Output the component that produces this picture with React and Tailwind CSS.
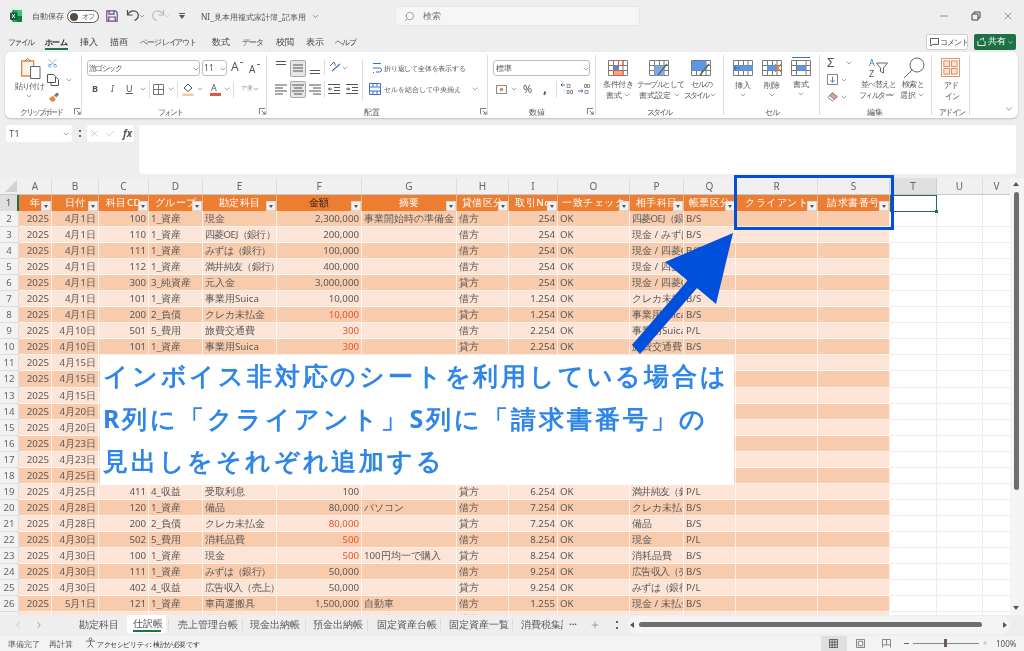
import { ChevronDown, ChevronLeft, ChevronRight, Search, Minus, X, Check, Plus, Scissors } from 'lucide-react'

const cols = [
  { k: 'a', w: 'w-[33px]', right: true },
  { k: 'b', w: 'w-[47px]', right: true },
  { k: 'c', w: 'w-[50px]', right: true },
  { k: 'd', w: 'w-[54px]' },
  { k: 'e', w: 'w-[74px]' },
  { k: 'f', w: 'w-[85px]', right: true },
  { k: 'g', w: 'w-[95px]' },
  { k: 'h', w: 'w-[52px]' },
  { k: 'i', w: 'w-[49px]', right: true },
  { k: 'o', w: 'w-[72px]' },
  { k: 'p', w: 'w-[54px]' },
  { k: 'q', w: 'w-[52px]' },
  { k: 'r', w: 'w-[82px]' },
  { k: 's', w: 'w-[72px]' },
]
const letters = ['A', 'B', 'C', 'D', 'E', 'F', 'G', 'H', 'I', 'O', 'P', 'Q', 'R', 'S']
const heads = ['年', '日付', '科目CD', 'グループ', '勘定科目', '金額', '摘要', '貸借区分', '取引No', '一致チェック', '相手科目', '帳票区分', 'クライアント', '請求書番号']

// [date, code, group, account, amount, memo, side, no, other, kind, red]
const rows = [
  ['4月1日', '100', '1_資産', '現金', '2,300,000', '事業開始時の準備金', '借方', '254', '四菱OEJ（銀行）', 'B/S'],
  ['4月1日', '110', '1_資産', '四菱OEJ（銀行）', '200,000', '', '借方', '254', '現金 / みずは', 'B/S'],
  ['4月1日', '111', '1_資産', 'みずは（銀行）', '100,000', '', '借方', '254', '現金 / 四菱OEJ', 'B/S'],
  ['4月1日', '112', '1_資産', '満井純友（銀行）', '400,000', '', '借方', '254', '現金 / 四菱OEJ', 'B/S'],
  ['4月1日', '300', '3_純資産', '元入金', '3,000,000', '', '貸方', '254', '現金 / 四菱OEJ', 'B/S'],
  ['4月1日', '101', '1_資産', '事業用Suica', '10,000', '', '借方', '1.254', 'クレカ未払金', 'B/S'],
  ['4月1日', '200', '2_負債', 'クレカ未払金', '10,000', '', '貸方', '1.254', '事業用Suica', 'B/S', true],
  ['4月10日', '501', '5_費用', '旅費交通費', '300', '', '借方', '2.254', '事業用Suica', 'P/L', true],
  ['4月10日', '101', '1_資産', '事業用Suica', '300', '', '貸方', '2.254', '旅費交通費', 'B/S', true],
  ['4月15日'], ['4月15日'], ['4月15日'], ['4月20日'], ['4月20日'], ['4月23日'], ['4月23日'], ['4月25日'],
  ['4月25日', '411', '4_収益', '受取利息', '100', '', '貸方', '6.254', '満井純友（銀行）', 'P/L'],
  ['4月28日', '120', '1_資産', '備品', '80,000', 'パソコン', '借方', '7.254', 'クレカ未払金', 'B/S'],
  ['4月28日', '200', '2_負債', 'クレカ未払金', '80,000', '', '貸方', '7.254', '備品', 'B/S', true],
  ['4月30日', '502', '5_費用', '消耗品費', '500', '', '借方', '8.254', '現金', 'P/L', true],
  ['4月30日', '100', '1_資産', '現金', '500', '100円均一で購入', '貸方', '8.254', '消耗品費', 'B/S', true],
  ['4月30日', '111', '1_資産', 'みずは（銀行）', '50,000', '', '借方', '9.254', '広告収入（売上）', 'B/S'],
  ['4月30日', '402', '4_収益', '広告収入（売上）', '50,000', '', '貸方', '9.254', 'みずは（銀行）', 'P/L'],
  ['5月1日', '121', '1_資産', '車両運搬具', '1,500,000', '自動車', '借方', '1.255', '現金 / 未払金', 'B/S'],
  ['5月1日', '200', '2_負債', '未払金', '1,500,000', '自動車', '貸方', '1.255', '車両運搬具', 'B/S'],
]

function T({ className, children }) {
  return <span className={`absolute whitespace-nowrap leading-[12px] ${className}`}>{children}</span>
}

function Chev({ className }) {
  return <ChevronDown strokeWidth={1.6} className={`absolute w-[8px] h-[8px] text-[#555] ${className}`} />
}

function Launcher({ className }) {
  return (
    <svg viewBox="0 0 8 8" className={`absolute w-[7px] h-[7px] ${className}`} fill="none" stroke="#666">
      <path d="M.5 7V.5H7M3 3l4 4M7 4v3H4" />
    </svg>
  )
}

function FilterBtn() {
  return (
    <span className="absolute right-[0px] bottom-[0px] w-[10px] h-[10px] bg-[#f0f0f0] border border-[#d8d8d8] flex items-center justify-center">
      <span className="w-0 h-0 border-l-[2.5px] border-r-[2.5px] border-t-[3px] border-l-transparent border-r-transparent border-t-[#555]" />
    </span>
  )
}

// 3x4 sheet icon used by the style and cell buttons
function Sheet({ className, children }) {
  return (
    <svg viewBox="0 0 20 16" className={`absolute w-[20px] h-[16px] ${className}`} fill="none">
      <path d="M.5.5h19v15H.5zM.5 5.5h19M.5 10.5h19M5.5.5v15M10.5.5v15M15 .5v15" stroke="#7a7a7a" />
      {children}
    </svg>
  )
}

function Lines({ className, d }) {
  return (
    <svg viewBox="0 0 14 14" className={`absolute w-[14px] h-[14px] ${className}`} fill="none" stroke="#555" strokeWidth="1">
      <path d={d} />
    </svg>
  )
}

function Sep({ className }) {
  return <span className={`absolute w-px bg-[#dcdcdc] ${className}`} />
}

function Grid() {
  return (
    <div className="absolute left-0 top-[178px] w-[1010px] h-[437px] overflow-hidden bg-white text-[9.7px] text-[#595959]">
      {/* column letters */}
      <div className="flex h-[17px] bg-[#f0f0f0] border-b border-[#c8c8c8] text-[10px] text-[#666] font-['Liberation_Sans',sans-serif]">
        <div className="w-[19px] relative">
          <span className="absolute right-[2px] bottom-[2px] w-0 h-0 border-l-[12px] border-t-[12px] border-l-transparent border-t-transparent border-b-0 border-r-[12px] border-r-[#d2d2d2]" />
        </div>
        {cols.map((c, i) => (
          <div key={c.k} className={`${c.w} border-r border-[#dddddd] flex items-center justify-center`}>{letters[i]}</div>
        ))}
        <div className="w-[47px] bg-[#e0e0e0] border-r border-[#cfcfcf] flex items-center justify-center">T</div>
        <div className="w-[46px] border-r border-[#dddddd] flex items-center justify-center">U</div>
        <div className="w-[27px] flex items-center justify-center">V</div>
      </div>
      {/* header row */}
      <div className="flex h-[16px]">
        <div className="w-[19px] bg-[#dedede] border-r-2 border-[#217346] text-center leading-[16px] text-[#555]">1</div>
        {cols.map((c, i) => (
          <div key={c.k} className={`${c.w} relative bg-[#ed7d31] border-r border-[#f5b68c] text-center font-medium leading-[15px] overflow-hidden whitespace-nowrap ${c.k === 'f' ? 'text-[#1a1a1a] font-bold' : 'text-white'}`}>
            <span className="tracking-[0.5px]">{heads[i]}</span>
            <FilterBtn />
          </div>
        ))}
        <div className="w-[47px] border-r border-[#ececec]" />
        <div className="w-[46px] border-r border-[#ececec]" />
      </div>
      {/* data rows */}
      {rows.map((r, i) => {
        const dark = i % 2 === 0
        const vals = { a: '2025', b: r[0], c: r[1], d: r[2], e: r[3], f: r[4], g: r[5], h: r[6], i: r[7], o: r[7] && 'OK', p: r[8], q: r[9] }
        return (
          <div key={i} className="flex h-[16.05px]">
            <div className="w-[19px] bg-[#f2f2f2] border-r border-b border-[#dcdcdc] text-center leading-[16px] text-[#666]">{i + 2}</div>
            {cols.map(c => (
              <div
                key={c.k}
                className={`${c.w} px-[2px] border-r border-b border-white/70 leading-[16.5px] overflow-hidden whitespace-nowrap ${c.right ? 'text-right' : ''} ${dark ? 'bg-[#f8cbad]' : 'bg-[#fce4d6]'} ${c.k === 'f' && r[10] ? 'text-[#e4572e]' : ''} ${vals[c.k] && vals[c.k].includes('（') ? 'tracking-[-0.7px]' : ''}`}
              >
                {vals[c.k]}
              </div>
            ))}
            <div className="w-[47px] border-r border-b border-[#ececec]" />
            <div className="w-[46px] border-r border-b border-[#ececec]" />
            <div className="w-[27px] border-b border-[#ececec]" />
          </div>
        )
      })}
      {/* selected cell T1 */}
      <div className="absolute left-[890px] top-[17px] w-[47px] h-[17px] border border-[#217346]">
        <span className="absolute right-[-2px] bottom-[-2px] w-[3px] h-[3px] bg-[#217346]" />
      </div>
    </div>
  )
}

function TitleBar() {
  return (
    <>
      <svg viewBox="0 0 12 12" className="absolute left-[10px] top-[10px] w-[12px] h-[12px]">
        <rect x="2" y="0" width="10" height="12" rx="1" fill="#21a366" />
        <rect x="7" y="0" width="5" height="6" fill="#33c481" />
        <rect x="7" y="6" width="5" height="6" fill="#107c41" />
        <rect x="0" y="2.5" width="7.5" height="7.5" rx="1" fill="#185c37" />
        <path d="M2 4l3 4M5 4L2 8" stroke="#fff" strokeWidth=".9" />
      </svg>
      <T className="left-[32px] top-[10px] text-[8px] text-[#555]">自動保存</T>
      <div className="absolute left-[67px] top-[10px] w-[32px] h-[13px] rounded-full border border-[#555] bg-white">
        <span className="absolute left-[2px] top-[1.5px] w-[8px] h-[8px] rounded-full bg-[#5a4a44]" />
        <T className="left-[14px] top-[0px] text-[7px] text-[#555] tracking-[-1px]">オフ</T>
      </div>
      <svg viewBox="0 0 12 12" className="absolute left-[106px] top-[10px] w-[12px] h-[12px]" fill="none" stroke="#6b4a80" strokeWidth="1.2">
        <path d="M.8.8h8.6l1.8 1.8v8.6H.8zM3 .8v3.4h5V.8M2.8 11.2V7h6.4v4.2" />
      </svg>
      <svg viewBox="0 0 14 14" className="absolute left-[126px] top-[8px] w-[14px] h-[14px]" fill="none" stroke="#4a4a4a" strokeWidth="1.2">
        <path d="M1.5 2v5h5M1.8 6.8C3 4 5 2.8 7.5 2.8c3 0 4.8 2.2 4.8 4.6 0 2.4-1.6 4-3.8 5" />
      </svg>
      <Chev className="left-[138px] top-[12px] w-[7px] h-[7px]" />
      <svg viewBox="0 0 14 14" className="absolute left-[151px] top-[8px] w-[14px] h-[14px]" fill="none" stroke="#bcbcbc" strokeWidth="1.2">
        <path d="M12.5 2v5h-5M12.2 6.8C11 4 9 2.8 6.5 2.8c-3 0-4.8 2.2-4.8 4.6 0 2.4 1.6 4 3.8 5" />
      </svg>
      <Chev className="left-[163px] top-[12px] w-[7px] h-[7px] opacity-30" />
      <span className="absolute left-[179px] top-[13px] w-[6px] h-px bg-[#555]" />
      <span className="absolute left-[179px] top-[15px] w-0 h-0 border-l-[3px] border-r-[3px] border-t-[4px] border-l-transparent border-r-transparent border-t-[#555]" />
      <T className="left-[201px] top-[11px] text-[8.4px] text-[#555]">NI_見本用複式家計簿_記事用</T>
      <Chev className="left-[311px] top-[12px] w-[9px] h-[9px]" />
      <div className="absolute left-[395px] top-[6px] w-[245px] h-[20px] rounded-[3px] bg-[#f6f6f6] border border-[#e6e6e6]">
        <Search strokeWidth={1.2} className="absolute left-[8px] top-[4px] w-[11px] h-[11px] text-[#666] -scale-x-100" />
        <T className="left-[27px] top-[3px] text-[9px] text-[#777]">検索</T>
      </div>
      <Minus strokeWidth={1.1} className="absolute left-[938px] top-[10px] w-[12px] h-[12px] text-[#444]" />
      <svg viewBox="0 0 10 10" className="absolute left-[971px] top-[11px] w-[10px] h-[10px]" fill="none" stroke="#444" strokeWidth="1">
        <path d="M1 3h6v6H1zM3 3V1h6v6H7" />
      </svg>
      <X strokeWidth={1.1} className="absolute left-[1002px] top-[10px] w-[12px] h-[12px] text-[#444]" />
    </>
  )
}

function MenuBar() {
  return (
    <div className="text-[8.8px] text-[#444]">
      <T className="left-[8px] top-[36px] text-[8px] tracking-[-1.75px]">ファイル</T>
      <T className="left-[45px] top-[36px] text-[8px] font-bold text-[#222] tracking-[-0.7px]">ホーム</T>
      <span className="absolute left-[45px] top-[48px] w-[23px] h-[2px] bg-[#217346]" />
      <T className="left-[80px] top-[36px]">挿入</T>
      <T className="left-[110px] top-[36px]">描画</T>
      <T className="left-[140px] top-[36px] text-[8px] tracking-[-1.1px]">ページ レイアウト</T>
      <T className="left-[212px] top-[36px]">数式</T>
      <T className="left-[242px] top-[36px] text-[8px] tracking-[-1px]">データ</T>
      <T className="left-[276px] top-[36px]">校閲</T>
      <T className="left-[306px] top-[36px]">表示</T>
      <T className="left-[335px] top-[36px] text-[8px] tracking-[-1px]">ヘルプ</T>
      <div className="absolute left-[926px] top-[34px] w-[42px] h-[16px] bg-white border border-[#cfcfcf] rounded-[2px]">
        <svg viewBox="0 0 10 10" className="absolute left-[3px] top-[3px] w-[9px] h-[9px]" fill="none" stroke="#444"><path d="M.5.5h9v6.5H3L1 9V7H.5z" /></svg>
        <T className="left-[13px] top-[1px] text-[7.8px] tracking-[-1px]">コメント</T>
      </div>
      <div className="absolute left-[974px] top-[34px] w-[42px] h-[16px] bg-[#1e7145] rounded-[2px] text-white">
        <svg viewBox="0 0 10 10" className="absolute left-[3px] top-[3px] w-[9px] h-[9px]" fill="none" stroke="#fff"><path d="M1 4.5v5h8v-5M3 3.5L7 1M7 1v3" /></svg>
        <T className="left-[14px] top-[1px] text-[8.6px]">共有</T>
        <ChevronDown strokeWidth={2} className="absolute left-[33px] top-[5px] w-[7px] h-[7px] text-white" />
      </div>
    </div>
  )
}

function Ribbon() {
  return (
    <div className="absolute left-[5px] top-[52px] w-[1013px] h-[66px] bg-white rounded-[6px] shadow-[0_1px_2px_rgba(0,0,0,0.2)]" />
  )
}

// everything inside the ribbon is placed in page coordinates
function RibbonItems() {
  return (
    <div className="text-[8.3px] text-[#555]">
      <Sep className="left-[81px] top-[55px] h-[60px]" />
      <Sep className="left-[266px] top-[55px] h-[60px]" />
      <Sep className="left-[487px] top-[55px] h-[60px]" />
      <Sep className="left-[723px] top-[55px] h-[60px]" />
      <Sep className="left-[819px] top-[55px] h-[60px]" />
      <Sep className="left-[931px] top-[55px] h-[60px]" />
      <Sep className="left-[969px] top-[55px] h-[60px]" />
      <Sep className="left-[595px] top-[55px] h-[60px]" />

      {/* clipboard */}
      <svg viewBox="0 0 20 21" className="absolute left-[21px] top-[58px] w-[20px] h-[21px]" fill="none">
        <path d="M.7 3h12v15H.7z" stroke="#e08a4a" strokeWidth="1.4" fill="#fdf3ea" />
        <path d="M4 3l2.5-2.5L9.5 3" stroke="#777" />
        <path d="M9.5 8.5h9.5v12H9.5z" stroke="#666" fill="#fff" />
      </svg>
      <T className="left-[15px] top-[80px] text-[7.6px] tracking-[-0.8px]">貼り付け</T>
      <Chev className="left-[25px] top-[92px]" />
      <Scissors strokeWidth={1.2} className="absolute left-[47px] top-[57px] w-[11px] h-[12px] text-[#3b73c4] -rotate-90" />
      <svg viewBox="0 0 12 12" className="absolute left-[47px] top-[74px] w-[12px] h-[12px]" fill="none" stroke="#555">
        <path d="M.5.5h6l2 2v6h-8zM4 8.5v3h7.5v-6l-2-2h-1" />
      </svg>
      <Chev className="left-[65px] top-[76px]" />
      <svg viewBox="0 0 12 12" className="absolute left-[48px] top-[92px] w-[12px] h-[11px]">
        <path d="M.5 7L5 4l3 4-3 3.5-1-2-1 1.5-1-2z" fill="#e8873c" />
        <path d="M6 3.5L9.5.5l2 2L8.5 6z" fill="#777" />
      </svg>
      <T className="left-[20px] top-[106px] text-[7.6px] tracking-[-2px]">クリップボード</T>
      <Launcher className="left-[74px] top-[108px]" />

      {/* font */}
      <div className="absolute left-[87px] top-[60px] w-[113px] h-[16px] border border-[#bdbdbd] rounded-[3px]">
        <T className="left-[1px] top-[1px] text-[7.8px] tracking-[-1.6px]">游ゴシック</T>
      </div>
      <Chev className="left-[192px] top-[65px]" />
      <div className="absolute left-[202px] top-[60px] w-[25px] h-[16px] border border-[#bdbdbd] rounded-[3px]">
        <T className="left-[1px] top-[1px] text-[8.6px]">11</T>
      </div>
      <Chev className="left-[219px] top-[65px]" />
      <T className="left-[231px] top-[61px] text-[12px] text-[#555] font-['Liberation_Sans',sans-serif]">A</T>
      <T className="left-[249px] top-[63px] text-[10px] text-[#555] font-['Liberation_Sans',sans-serif]">A</T>
      <span className="absolute left-[240px] top-[62px] w-[3px] h-[2px] border-t border-[#3b73c4]" />
      <span className="absolute left-[257px] top-[63px] w-[3px] h-[2px] border-b border-[#3b73c4]" />
      <T className="left-[92px] top-[83px] text-[9px] font-bold font-['Liberation_Sans',sans-serif]">B</T>
      <T className="left-[111px] top-[83px] text-[9px] italic font-['Liberation_Serif',serif]">I</T>
      <T className="left-[126px] top-[83px] text-[9px] underline font-['Liberation_Sans',sans-serif]">U</T>
      <Chev className="left-[139px] top-[85px]" />
      <Sep className="left-[149px] top-[81px] h-[17px]" />
      <svg viewBox="0 0 11 11" className="absolute left-[153px] top-[84px] w-[11px] h-[11px]" fill="none" stroke="#777"><path d="M.5.5h10v10H.5zM5.5.5v10M.5 5.5h10" /></svg>
      <Chev className="left-[167px] top-[85px]" />
      <Sep className="left-[177px] top-[81px] h-[17px]" />
      <svg viewBox="0 0 12 13" className="absolute left-[182px] top-[83px] w-[12px] h-[13px]" fill="none">
        <path d="M2 5l4-4 4 4-4 3.5z" stroke="#555" />
        <rect x="0.5" y="10.5" width="11" height="2.5" fill="#f6c7a8" />
      </svg>
      <Chev className="left-[196px] top-[85px]" />
      <T className="left-[211px] top-[82px] text-[9px] font-['Liberation_Sans',sans-serif]">A</T>
      <span className="absolute left-[210px] top-[93px] w-[11px] h-[3px] bg-[#e2583e]" />
      <Chev className="left-[223px] top-[85px]" />
      <Sep className="left-[233px] top-[81px] h-[17px]" />
      <T className="left-[241px] top-[82px] text-[5.5px] leading-[7px] text-[#888] whitespace-normal w-[6px]">ア亜</T>
      <Chev className="left-[252px] top-[85px]" />
      <T className="left-[158px] top-[106px] text-[7.6px] tracking-[-2.1px]">フォント</T>
      <Launcher className="left-[259px] top-[108px]" />

      {/* alignment */}
      <Lines className="left-[274px] top-[59px]" d="M2 2.5h10M2 5.5h10" />
      <span className="absolute left-[290px] top-[60px] w-[16px] h-[17px] bg-[#e6e6e6] border border-[#a8a8a8] rounded-[2px]" />
      <Lines className="left-[291px] top-[61px]" d="M2 4h10M2 7h10M2 10h10" />
      <Lines className="left-[308px] top-[63px]" d="M2 7.5h10M2 10.5h10" />
      <Sep className="left-[324px] top-[60px] h-[15px]" />
      <svg viewBox="0 0 12 12" className="absolute left-[329px] top-[61px] w-[12px] h-[12px]" fill="none" stroke="#666"><path d="M1 5l4-4 1.5 3.5" /><path d="M3 10l8-7" stroke="#3b73c4" strokeWidth="1.2" /></svg>
      <Chev className="left-[341px] top-[64px]" />
      <Sep className="left-[362px] top-[60px] h-[40px]" />
      <svg viewBox="0 0 12 12" className="absolute left-[371px] top-[62px] w-[12px] h-[12px]" fill="none" stroke="#666"><path d="M2 1.5h8M2 6h6.5a2 2 0 010 4H5" stroke="#3b73c4" /><path d="M2 10.5h1" /></svg>
      <T className="left-[384px] top-[62px] text-[7.2px] tracking-[-0.2px]">折り返して全体を表示する</T>
      <Lines className="left-[274px] top-[82px]" d="M1 3h12M1 6h8M1 9h12M1 12h8" />
      <span className="absolute left-[290px] top-[81px] w-[16px] h-[17px] bg-[#e6e6e6] border border-[#a8a8a8] rounded-[2px]" />
      <Lines className="left-[291px] top-[82px]" d="M1 3h12M3 6h8M1 9h12M3 12h8" />
      <Lines className="left-[308px] top-[82px]" d="M1 3h12M5 6h8M1 9h12M5 12h8" />
      <Sep className="left-[324px] top-[81px] h-[17px]" />
      <Lines className="left-[327px] top-[82px]" d="M1 2.5h12M7 5.5h6M7 8.5h6M1 11.5h12M5 7H1.5M3 5.5L1.5 7 3 8.5" />
      <Lines className="left-[345px] top-[82px]" d="M1 2.5h12M7 5.5h6M7 8.5h6M1 11.5h12M1 7h3.5M3 5.5L4.5 7 3 8.5" />
      <svg viewBox="0 0 12 12" className="absolute left-[369px] top-[83px] w-[12px] h-[12px]" fill="none" stroke="#3b73c4"><path d="M.5.5h11v11H.5zM.5 4h11M.5 8h11M4 .5v3M8 .5v3M4 8v3.5M8 8v3.5" /></svg>
      <T className="left-[384px] top-[83px] text-[7.2px]">セルを結合して中央揃え</T>
      <Chev className="left-[471px] top-[85px]" />
      <T className="left-[364px] top-[106px]">配置</T>
      <Launcher className="left-[480px] top-[108px]" />

      {/* number */}
      <div className="absolute left-[493px] top-[60px] w-[97px] h-[16px] border border-[#bdbdbd] rounded-[3px]">
        <T className="left-[2px] top-[1px] text-[8.4px]">標準</T>
      </div>
      <Chev className="left-[582px] top-[65px]" />
      <svg viewBox="0 0 12 10" className="absolute left-[496px] top-[85px] w-[11px] h-[9px]" fill="none" stroke="#777"><path d="M.5.5h11v9H.5z" /><circle cx="6" cy="5" r="2" fill="#e8873c" stroke="none" /></svg>
      <Chev className="left-[510px] top-[85px]" />
      <T className="left-[523px] top-[83px] text-[11px] font-['Liberation_Sans',sans-serif]">%</T>
      <T className="left-[543px] top-[82px] text-[14px] font-bold font-['Liberation_Serif',serif]">,</T>
      <Sep className="left-[556px] top-[81px] h-[17px]" />
      <svg viewBox="0 0 13 12" className="absolute left-[560px] top-[83px] w-[13px] h-[12px]" fill="none" stroke="#3b73c4"><path d="M5 2H1M2.5.5L1 2l1.5 1.5" /><path d="M7 1.5h3v3H7zM4 8h.8M7 7.5h2v3H7zM10.5 7.5h2v3h-2z" stroke="#777" strokeWidth=".8" /></svg>
      <svg viewBox="0 0 13 12" className="absolute left-[577px] top-[83px] w-[13px] h-[12px]" fill="none" stroke="#3b73c4"><path d="M1 8h5M4.5 6.5L6 8 4.5 9.5" /><path d="M7.5 1.5h2v3h-2zM10.5 1.5h2v3h-2zM8 7.5h3v3H8z" stroke="#777" strokeWidth=".8" /></svg>
      <T className="left-[529px] top-[106px]">数値</T>
      <Launcher className="left-[587px] top-[108px]" />

      {/* styles */}
      <Sheet className="left-[608px] top-[60px]">
        <path d="M5.5.5H15v5H5.5z" stroke="#e2583e" />
        <rect x="5.5" y="5.5" width="5" height="5" fill="#4a8fe0" />
        <rect x="5.5" y="10.5" width="9.5" height="5" fill="#e6a88a" stroke="#e2583e" />
      </Sheet>
      <T className="left-[603px] top-[78px] text-[7.6px] tracking-[-0.3px]">条件付き</T>
      <T className="left-[606px] top-[89px]">書式</T>
      <Chev className="left-[623px] top-[91px]" />
      <Sheet className="left-[649px] top-[60px]">
        <rect x="5.5" y="5.5" width="9.5" height="10" fill="#7aaee8" />
        <path d="M9 15L18 4" stroke="#666" strokeWidth="1.5" />
      </Sheet>
      <T className="left-[637px] top-[78px] text-[7.6px] tracking-[-1.4px]">テーブルとして</T>
      <T className="left-[639px] top-[89px]">書式設定</T>
      <Chev className="left-[673px] top-[91px]" />
      <Sheet className="left-[691px] top-[60px]">
        <rect x="1" y="1" width="14" height="9.5" fill="#5b98e6" />
        <path d="M9 15L18 4" stroke="#666" strokeWidth="1.5" />
      </Sheet>
      <T className="left-[691px] top-[78px] text-[7.6px] tracking-[-0.9px]">セルの</T>
      <T className="left-[684px] top-[89px] text-[7.6px] tracking-[-1.85px]">スタイル</T>
      <Chev className="left-[709px] top-[91px]" />
      <T className="left-[647px] top-[106px] text-[7.6px] tracking-[-1.85px]">スタイル</T>

      {/* cells */}
      <Sheet className="left-[733px] top-[60px]">
        <rect x="0" y="5.5" width="20" height="5" fill="#5b98e6" />
        <path d="M7 8H1M3.5 5.5L1 8l2.5 2.5" stroke="#2e6fc4" />
      </Sheet>
      <T className="left-[735px] top-[79px]">挿入</T>
      <Chev className="left-[739px] top-[91px]" />
      <Sheet className="left-[762px] top-[60px]">
        <rect x="5" y="5.5" width="10" height="5" fill="#5b98e6" />
        <path d="M13 4l6 8M19 4l-6 8" stroke="#e8703c" strokeWidth="1.2" />
      </Sheet>
      <T className="left-[764px] top-[79px]">削除</T>
      <Chev className="left-[768px] top-[91px]" />
      <svg viewBox="0 0 20 20" className="absolute left-[791px] top-[56px] w-[20px] h-[20px]" fill="none">
        <path d="M1 1.5h18" stroke="#3b73c4" />
        <path d="M.5 4.5h19v15H.5zM.5 9.5h19M.5 14.5h19M5.5 4.5v15M15 4.5v15" stroke="#7a7a7a" />
        <rect x="6" y="9.5" width="9" height="5" fill="#5b98e6" />
      </svg>
      <T className="left-[793px] top-[78px]">書式</T>
      <Chev className="left-[797px] top-[90px]" />
      <T className="left-[765px] top-[106px] text-[7.6px] tracking-[-1px]">セル</T>

      {/* editing */}
      <T className="left-[827px] top-[56px] text-[13px] font-['Liberation_Sans',sans-serif]">Σ</T>
      <Chev className="left-[845px] top-[59px]" />
      <svg viewBox="0 0 12 12" className="absolute left-[827px] top-[74px] w-[11px] h-[11px]" fill="none"><path d="M.5.5h11v11H.5z" stroke="#777" /><path d="M6 3v6M3.5 6.5L6 9l2.5-2.5" stroke="#3b73c4" /></svg>
      <Chev className="left-[840px] top-[76px]" />
      <svg viewBox="0 0 12 11" className="absolute left-[827px] top-[92px] w-[11px] h-[10px]" fill="none" stroke="#777"><path d="M1 6l5-5 5 4-5 5z" /><path d="M6 1l5 4-3 3-5-4z" fill="#e4a0a0" /></svg>
      <Chev className="left-[840px] top-[93px]" />
      <T className="left-[869px] top-[57px] text-[9px] text-[#3b73c4] font-['Liberation_Sans',sans-serif]">A</T>
      <T className="left-[869px] top-[68px] text-[9px] font-['Liberation_Sans',sans-serif]">Z</T>
      <svg viewBox="0 0 12 12" className="absolute left-[876px] top-[62px] w-[12px] h-[12px]" fill="none" stroke="#666"><path d="M.5 1h11L7.5 6v5l-3-1.5V6z" /></svg>
      <T className="left-[861px] top-[78px] text-[7.6px] tracking-[-1px]">並べ替えと</T>
      <T className="left-[859px] top-[89px] text-[7.6px] tracking-[-1.6px]">フィルター</T>
      <Chev className="left-[888px] top-[91px]" />
      <svg viewBox="0 0 22 22" className="absolute left-[903px] top-[57px] w-[22px] h-[22px]" fill="none" stroke="#666"><circle cx="14" cy="8" r="7" /><path d="M9 13l-8 8" /></svg>
      <T className="left-[902px] top-[78px] text-[7.6px] tracking-[-0.6px]">検索と</T>
      <T className="left-[900px] top-[89px]">選択</T>
      <Chev className="left-[917px] top-[91px]" />
      <T className="left-[867px] top-[106px]">編集</T>

      {/* add-ins */}
      <svg viewBox="0 0 20 20" className="absolute left-[941px] top-[58px] w-[19px] h-[19px]" fill="#fbe3d4" stroke="#e08a5a">
        <path d="M.5.5h19v19H.5z" fill="none" />
        <rect x="3" y="3" width="6" height="6" />
        <rect x="11" y="3" width="6" height="6" />
        <rect x="3" y="11" width="6" height="6" />
        <rect x="11" y="11" width="6" height="6" />
      </svg>
      <T className="left-[944px] top-[79px] text-[7.6px] tracking-[-1px]">アド</T>
      <T className="left-[945px] top-[90px] text-[7.6px] tracking-[-1px]">イン</T>
      <T className="left-[939px] top-[106px] text-[7.6px] tracking-[-1.6px]">アドイン</T>
      <ChevronDown strokeWidth={1.4} className="absolute left-[1004px] top-[104px] w-[10px] h-[10px] text-[#555]" />
    </div>
  )
}

function FormulaBar() {
  return (
    <>
      <div className="absolute left-[6px] top-[125px] w-[66px] h-[17px] bg-white rounded-[3px]">
        <T className="left-[3px] top-[3px] text-[9.5px] text-[#555] font-['Liberation_Sans',sans-serif]">T1</T>
        <Chev className="left-[56px] top-[5px]" />
      </div>
      <span className="absolute left-[79px] top-[130px] w-[2px] h-[7px] border-y-2 border-[#666]" />
      <div className="absolute left-[87px] top-[125px] w-[47px] h-[17px] bg-white rounded-[3px]">
        <X strokeWidth={1.2} className="absolute left-[2px] top-[3px] w-[11px] h-[11px] text-[#aaa]" />
        <Check strokeWidth={1.2} className="absolute left-[18px] top-[3px] w-[11px] h-[11px] text-[#aaa]" />
        <T className="left-[36px] top-[2px] text-[10px] italic font-bold text-[#555] font-['Liberation_Serif',serif]">fx</T>
      </div>
      <div className="absolute left-[139px] top-[125px] w-[877px] h-[49px] bg-white rounded-[3px]" />
    </>
  )
}

function Callout() {
  return (
    <>
      <div className="absolute left-[100px] top-[355px] w-[634px] h-[130px] bg-white text-[25px] font-bold text-[#2f86e6] tracking-[2.8px]">
        <T className="left-[3px] top-[2px] leading-[36px]">インボイス非対応のシートを利用している場合は</T>
        <T className="left-[3px] top-[45px] leading-[36px] tracking-[3px]">R列に「クライアント」S列に「請求書番号」の</T>
        <T className="left-[3px] top-[87px] leading-[36px]">見出しをそれぞれ追加する</T>
      </div>
      <div className="absolute left-[734px] top-[175px] w-[160px] h-[55px] border-[3px] border-[#0050dc]" />
      <svg viewBox="0 0 1024 651" className="absolute left-0 top-0 w-[1024px] h-[651px] pointer-events-none">
        <polygon points="733,233 716,304 697,288 640,354 632,345 687.6,280.6 665,262" fill="#0050dc" />
      </svg>
    </>
  )
}

function BottomBars() {
  return (
    <>
      <div className="absolute left-0 top-[615px] w-[1024px] h-[21px] bg-[#eeeeee] text-[9.5px] text-[#555]">
        <ChevronLeft strokeWidth={1.3} className="absolute left-[13px] top-[5px] w-[10px] h-[10px] text-[#aaa]" />
        <ChevronRight strokeWidth={1.3} className="absolute left-[34px] top-[5px] w-[10px] h-[10px] text-[#555]" />
        <T className="left-[79px] top-[4px]">勘定科目</T>
        <div className="absolute left-[127px] top-0 w-[39px] h-[18px] bg-white">
          <T className="left-[6px] top-[3px]">仕訳帳</T>
          <span className="absolute left-[6px] top-[15px] w-[28px] h-[2px] bg-[#217346]" />
        </div>
        <Sep className="left-[168px] top-[4px] h-[12px]" />
        <T className="left-[178px] top-[4px]">売上管理台帳</T>
        <Sep className="left-[242px] top-[4px] h-[12px]" />
        <T className="left-[250px] top-[4px]">現金出納帳</T>
        <Sep className="left-[305px] top-[4px] h-[12px]" />
        <T className="left-[313px] top-[4px]">預金出納帳</T>
        <Sep className="left-[367px] top-[4px] h-[12px]" />
        <T className="left-[377px] top-[4px]">固定資産台帳</T>
        <Sep className="left-[440px] top-[4px] h-[12px]" />
        <T className="left-[449px] top-[4px]">固定資産一覧</T>
        <Sep className="left-[512px] top-[4px] h-[12px]" />
        <div className="absolute left-[521px] top-[4px] w-[42px] h-[12px] overflow-hidden">
          <T className="left-0 top-0">消費税集計表</T>
        </div>
        <T className="left-[569px] top-[3px] font-bold">···</T>
        <Plus strokeWidth={1.2} className="absolute left-[590px] top-[5px] w-[10px] h-[10px] text-[#555]" />
        <span className="absolute left-[616px] top-[6px] w-[2px] h-[8px] border-y-2 border-[#666]" />
        <div className="absolute left-[628px] top-[1px] w-[382px] h-[18px] bg-[#f4f4f4] rounded-full">
          <span className="absolute left-[2px] top-[6px] w-0 h-0 border-y-[3.5px] border-r-[4px] border-y-transparent border-r-[#555]" />
          <span className="absolute left-[11px] top-[6px] w-[343px] h-[5px] rounded-full bg-[#6e6e6e]" />
          <span className="absolute left-[375px] top-[6px] w-0 h-0 border-y-[3.5px] border-l-[4px] border-y-transparent border-l-[#555]" />
        </div>
      </div>
      <div className="absolute left-0 top-[636px] w-[1024px] h-[15px] bg-[#f3f3f3] text-[7.8px] text-[#555]">
        <T className="left-[8px] top-[2px]">準備完了</T>
        <T className="left-[49px] top-[2px]">再計算</T>
        <svg viewBox="0 0 12 12" className="absolute left-[85px] top-[1px] w-[11px] h-[11px]" fill="none" stroke="#666"><circle cx="6" cy="2.5" r="1.5" /><path d="M1 4.5h10M6 5v3L3 11.5M6 8l3 3.5" /></svg>
        <T className="left-[97px] top-[2px] text-[7.4px] font-medium text-[#333] tracking-[-0.4px]">アクセシビリティ: 検討が必要です</T>
        <span className="absolute left-[821px] top-0 w-[26px] h-[15px] bg-[#dfdfdf]" />
        <svg viewBox="0 0 10 10" className="absolute left-[829px] top-[3px] w-[9px] h-[9px]" fill="none" stroke="#555"><path d="M.5.5h9v9h-9zM3.5.5v9M6.5.5v9M.5 3.5h9M.5 6.5h9" /></svg>
        <svg viewBox="0 0 10 10" className="absolute left-[856px] top-[3px] w-[9px] h-[9px]" fill="none" stroke="#777"><path d="M.5.5h9v9h-9zM2.5 2.5h5v5h-5z" /></svg>
        <svg viewBox="0 0 10 10" className="absolute left-[882px] top-[3px] w-[9px] h-[9px]" fill="none" stroke="#777"><path d="M.5 9.5V.5h9v9M.5 6.5h9M5 .5v6" /></svg>
        <span className="absolute left-[904px] top-[7px] w-[5px] h-px bg-[#666]" />
        <span className="absolute left-[913px] top-[7px] w-[66px] h-px bg-[#888]" />
        <span className="absolute left-[944px] top-[3px] w-[3px] h-[8px] bg-[#6b5a55]" />
        <Plus strokeWidth={1.2} className="absolute left-[982px] top-[4px] w-[6px] h-[6px] text-[#666]" />
        <T className="left-[996px] top-[2px] text-[8px]">100%</T>
      </div>
    </>
  )
}

export default function App() {
  return (
    <div className="relative w-[1024px] h-[651px] overflow-hidden bg-[#eeeeee] font-['Noto_Sans_CJK_JP','Noto_Sans',sans-serif] blur-[0.35px]">
      <TitleBar />
      <MenuBar />
      <Ribbon />
      <RibbonItems />
      <FormulaBar />
      <Grid />
      {/* vertical scrollbar */}
      <div className="absolute left-[1010px] top-[178px] w-[14px] h-[437px] bg-[#f4f4f4]">
        <span className="absolute left-[3px] top-[4px] w-0 h-0 border-x-[3.5px] border-b-[4px] border-x-transparent border-b-[#555]" />
        <span className="absolute left-[4px] top-[14px] w-[5px] h-[298px] rounded-full bg-[#6e6e6e]" />
        <span className="absolute left-[3px] top-[428px] w-0 h-0 border-x-[3.5px] border-t-[4px] border-x-transparent border-t-[#555]" />
      </div>
      <BottomBars />
      <Callout />
    </div>
  )
}
